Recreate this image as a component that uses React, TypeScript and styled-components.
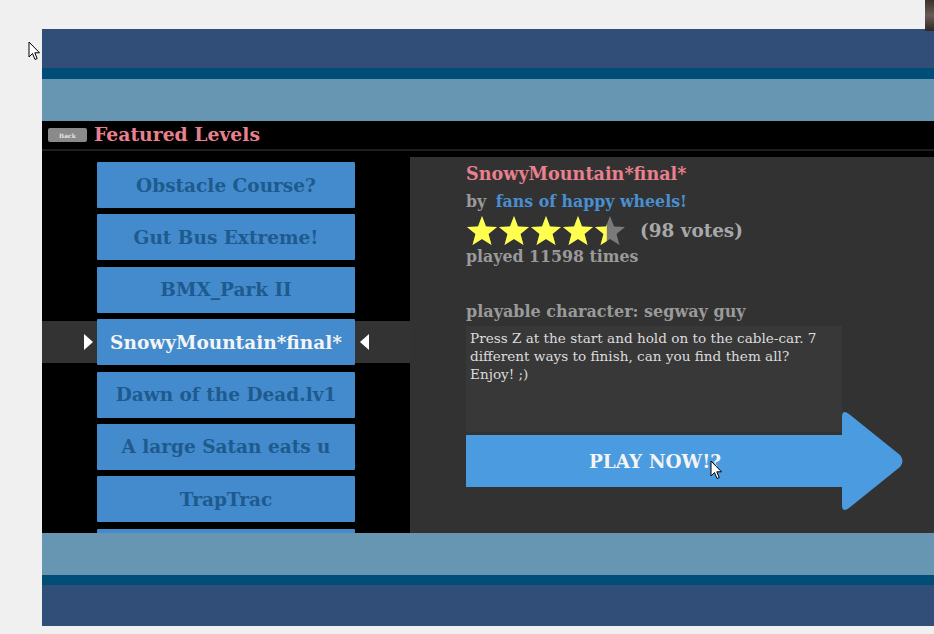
import styled, { createGlobalStyle } from "styled-components";

const GlobalStyle = createGlobalStyle`
  html, body {
    margin: 0;
    padding: 0;
    background: #f0f0f0;
    overflow: hidden;
  }
`;

const SERIF = `"DejaVu Serif", "Liberation Serif", serif`;

const levels = [
  "Obstacle Course?",
  "Gut Bus Extreme!",
  "BMX_Park II",
  "SnowyMountain*final*",
  "Dawn of the Dead.lv1",
  "A large Satan eats u",
  "TrapTrac",
];
const SELECTED = 3;

function Cursor() {
  return (
    <svg width="13" height="20" viewBox="0 0 13 20">
      <path
        d="M1 1 L1 16 L4.5 12.5 L7 18.5 L9.2 17.5 L6.8 11.8 L11.5 11.8 Z"
        fill="#fff"
        stroke="#000"
        strokeWidth="1"
        strokeLinejoin="round"
      />
    </svg>
  );
}

function Star({ fill }: { fill: number }) {
  const id = `clip${Math.round(fill * 100)}`;
  const pts =
    "16,1 20,11.5 31,12 22.5,19 25.5,30 16,24 6.5,30 9.5,19 1,12 12,11.5";
  return (
    <svg width="32" height="31" viewBox="0 0 32 31">
      <defs>
        <clipPath id={id}>
          <rect x="0" y="0" width={32 * fill} height="31" />
        </clipPath>
      </defs>
      <polygon points={pts} fill="#7a7a7a" />
      <polygon points={pts} fill="#ffff4d" clipPath={`url(#${id})`} />
    </svg>
  );
}

function App() {
  const rating = 4.4;
  return (
    <>
      <GlobalStyle />
      <Page>
        <CornerThumb />
        <MouseTop>
          <Cursor />
        </MouseTop>
        <Frame>
          <Band $h={39} $c="#314e78" />
          <Band $h={11} $c="#004e78" />
          <Band $h={42} $c="#6796b2" />
          <Stage>
            <Header>
              <BackButton>Back</BackButton>
              <Title>Featured Levels</Title>
            </Header>
            <Body>
              <List>
                {levels.map((name, i) => (
                  <Row key={name} $active={i === SELECTED}>
                    {i === SELECTED && <Pointer $dir="right" />}
                    <LevelButton $active={i === SELECTED}>{name}</LevelButton>
                    {i === SELECTED && <Pointer $dir="left" />}
                  </Row>
                ))}
                {/* next page of levels peeks in under the fold */}
                <Row $active={false}>
                  <LevelButton $active={false} />
                </Row>
              </List>
              <Details>
                <LevelName>SnowyMountain*final*</LevelName>
                <Author>
                  by <AuthorName>fans of happy wheels!</AuthorName>
                </Author>
                <RatingRow>
                  <Stars>
                    {[0, 1, 2, 3, 4].map((i) => (
                      <Star key={i} fill={Math.max(0, Math.min(1, rating - i))} />
                    ))}
                  </Stars>
                  <Votes>(98 votes)</Votes>
                </RatingRow>
                <Stat>played 11598 times</Stat>
                <Character>playable character: segway guy</Character>
                <Description>
                  Press Z at the start and hold on to the cable-car. 7 different
                  ways to finish, can you find them all? Enjoy! ;)
                </Description>
                <PlayButton>
                  <PlayShaft>PLAY NOW!?</PlayShaft>
                  <PlayHead viewBox="0 0 62 104" width="62" height="104">
                    <path
                      d="M0 8 Q0 0 7 5 L58 46 Q63 52 58 58 L7 99 Q0 104 0 96 Z"
                      fill="#4a9be0"
                    />
                  </PlayHead>
                  <MouseOver>
                    <Cursor />
                  </MouseOver>
                </PlayButton>
              </Details>
            </Body>
          </Stage>
          <Band $h={42} $c="#6796b2" />
          <Band $h={10} $c="#004e78" />
          <Band $h={41} $c="#314e78" />
        </Frame>
      </Page>
    </>
  );
}

const Page = styled.div`
  position: relative;
  width: 934px;
  height: 634px;
  padding: 29px 0 0 42px;
  box-sizing: border-box;
`;

const CornerThumb = styled.div`
  position: absolute;
  top: 0;
  right: 0;
  width: 9px;
  height: 31px;
  background: linear-gradient(180deg, #3b3230, #6a5a55 50%, #2b2624);
`;

const MouseTop = styled.div`
  position: absolute;
  left: 28px;
  top: 41px;
  z-index: 3;
`;

const Frame = styled.div`
  display: flex;
  flex-direction: column;
  width: 892px;
  height: 597px;
`;

const Band = styled.div<{ $h: number; $c: string }>`
  flex: 0 0 ${(p) => p.$h}px;
  background: ${(p) => p.$c};
`;

const Stage = styled.div`
  flex: 0 0 412px;
  background: #000;
  display: flex;
  flex-direction: column;
  overflow: hidden;
`;

const Header = styled.div`
  height: 28px;
  display: flex;
  align-items: center;
  gap: 7px;
  padding-left: 6px;
  border-bottom: 2px solid #1e1e1e;
`;

const BackButton = styled.div`
  width: 39px;
  height: 14px;
  background: #8a8a8a;
  border-radius: 2px;
  color: #e6e6e6;
  font-family: ${SERIF};
  font-size: 6px;
  font-weight: bold;
  display: flex;
  align-items: center;
  justify-content: center;
`;

const Title = styled.div`
  color: #e8808e;
  font-family: ${SERIF};
  font-weight: bold;
  font-size: 18.8px;
  margin-top: -2px;
`;

const Body = styled.div`
  flex: 1;
  display: flex;
  min-height: 0;
`;

const List = styled.div`
  width: 368px;
  padding-top: 11px;
  display: flex;
  flex-direction: column;
  gap: 6.4px;
`;

const Row = styled.div<{ $active: boolean }>`
  position: relative;
  height: 46px;
  flex: 0 0 46px;
  display: flex;
  align-items: center;
  background: ${(p) =>
    p.$active
      ? "linear-gradient(180deg, transparent 2px, #333 2px, #333 44px, transparent 44px)"
      : "transparent"};
`;

const Pointer = styled.div<{ $dir: "left" | "right" }>`
  position: absolute;
  top: 15px;
  width: 0;
  height: 0;
  border-top: 8px solid transparent;
  border-bottom: 8px solid transparent;
  ${(p) =>
    p.$dir === "right"
      ? "left: 42px; border-left: 9px solid #fff;"
      : "left: 318px; border-right: 9px solid #fff;"}
`;

const LevelButton = styled.div<{ $active: boolean }>`
  margin-left: 55px;
  width: 258px;
  height: 46px;
  background: #438bcd;
  border-radius: 1px;
  display: flex;
  align-items: center;
  justify-content: center;
  font-family: ${SERIF};
  font-weight: bold;
  font-size: 18.5px;
  color: ${(p) => (p.$active ? "#f4f4f4" : "#1f5a8e")};
  white-space: nowrap;
`;

const Details = styled.div`
  flex: 1;
  margin-top: 6px;
  background: #323232;
  padding: 5px 0 0 56px;
  display: flex;
  flex-direction: column;
  font-family: ${SERIF};
  font-weight: bold;
`;

const LevelName = styled.div`
  color: #e8808e;
  font-size: 17.6px;
  line-height: 22px;
  margin-top: 1px;
`;

const Author = styled.div`
  color: #9a9a9a;
  font-size: 15.8px;
  line-height: 20px;
  margin-top: 7px;
`;

const AuthorName = styled.span`
  color: #4a8fd0;
  margin-left: 4px;
`;

const RatingRow = styled.div`
  display: flex;
  align-items: center;
  gap: 14px;
  margin-top: 3px;
`;

const Stars = styled.div`
  display: flex;
`;

const Votes = styled.div`
  color: #a8a8a8;
  font-size: 18.4px;
`;

const Stat = styled.div`
  color: #9a9a9a;
  font-size: 15.8px;
  line-height: 20px;
  margin-top: 1px;
`;

const Character = styled.div`
  color: #9a9a9a;
  font-size: 16px;
  line-height: 20px;
  margin-top: 35px;
`;

const Description = styled.div`
  width: 376px;
  height: 106px;
  box-sizing: border-box;
  margin-top: 4px;
  background: #383838;
  padding: 3px 6px 0 4px;
  color: #dcdcdc;
  font-weight: normal;
  font-size: 13.6px;
  line-height: 18px;
`;

const PlayButton = styled.div`
  position: relative;
  margin-top: -23px;
  height: 104px;
  display: flex;
  align-items: center;
`;

const PlayShaft = styled.div`
  width: 378px;
  height: 52px;
  background: #4a9be0;
  display: flex;
  align-items: center;
  justify-content: center;
  color: #f4f4f4;
  font-size: 18.4px;
  margin-right: -2px;
`;

const PlayHead = styled.svg`
  display: block;
`;

const MouseOver = styled.div`
  position: absolute;
  left: 244px;
  top: 51px;
`;

export default App;
